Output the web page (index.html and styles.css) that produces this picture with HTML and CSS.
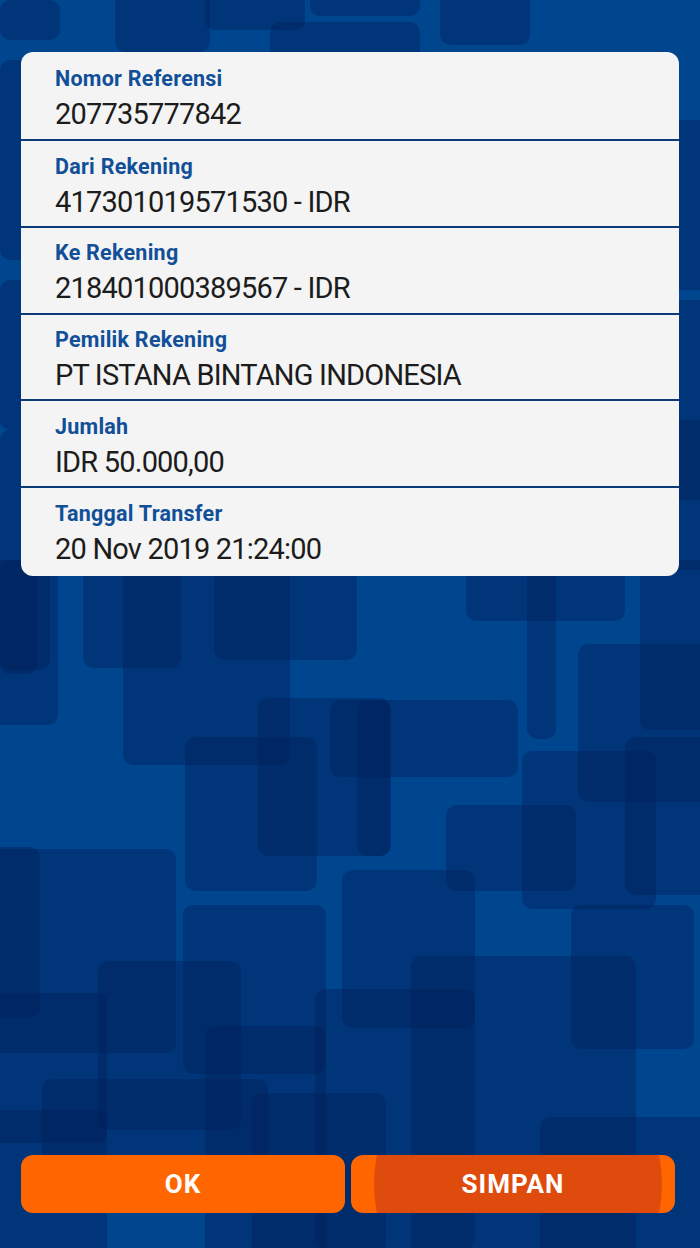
FILE: index.html
```html
<!DOCTYPE html>
<html lang="id">
<head>
<meta charset="utf-8">
<title>Detail Transfer</title>
<link rel="stylesheet" href="styles.css">
</head>
<body>
<div class="screen">
  <svg class="bg" viewBox="0 0 700 1248" preserveAspectRatio="none" aria-hidden="true">
    <g class="tiles">
      <rect x="0" y="0" width="60" height="40" rx="10"/>
      <rect x="115" y="-10" width="95" height="62" rx="10"/>
      <rect x="205" y="-10" width="100" height="40" rx="10"/>
      <rect x="270" y="22" width="150" height="40" rx="10"/>
      <rect x="310" y="-10" width="110" height="26" rx="10"/>
      <rect x="440" y="-10" width="90" height="55" rx="10"/>
      <rect x="0" y="60" width="40" height="200" rx="10"/>
      <rect x="0" y="280" width="30" height="150" rx="10"/>
      <rect x="0" y="430" width="50" height="240" rx="10"/>
      <rect x="650" y="120" width="60" height="170" rx="10"/>
      <rect x="660" y="300" width="50" height="200" rx="10"/>
      <rect x="640" y="420" width="70" height="150" rx="10"/>
      <rect x="0" y="560" width="37" height="114" rx="10"/>
      <rect x="-10" y="560" width="68" height="165" rx="10"/>
      <rect x="83" y="570" width="98" height="98" rx="10"/>
      <rect x="123" y="560" width="167" height="205" rx="10"/>
      <rect x="214" y="570" width="143" height="90" rx="10"/>
      <rect x="466" y="560" width="159" height="61" rx="10"/>
      <rect x="527" y="570" width="29" height="169" rx="10"/>
      <rect x="640" y="560" width="70" height="170" rx="10"/>
      <rect x="578" y="644" width="132" height="158" rx="10"/>
      <rect x="258" y="698" width="132" height="158" rx="10"/>
      <rect x="330" y="700" width="188" height="77" rx="10"/>
      <rect x="357" y="700" width="34" height="156" rx="10"/>
      <rect x="185" y="737" width="132" height="154" rx="10"/>
      <rect x="522" y="751" width="134" height="158" rx="10"/>
      <rect x="625" y="737" width="85" height="158" rx="10"/>
      <rect x="446" y="805" width="130" height="86" rx="10"/>
      <rect x="-10" y="849" width="186" height="204" rx="10"/>
      <rect x="-10" y="847" width="50" height="170" rx="10"/>
      <rect x="183" y="905" width="143" height="169" rx="10"/>
      <rect x="342" y="870" width="133" height="158" rx="10"/>
      <rect x="571" y="905" width="123" height="144" rx="10"/>
      <rect x="411" y="956" width="225" height="300" rx="10"/>
      <rect x="98" y="961" width="143" height="169" rx="10"/>
      <rect x="-10" y="993" width="117" height="150" rx="10"/>
      <rect x="205" y="1026" width="121" height="230" rx="10"/>
      <rect x="315" y="989" width="160" height="260" rx="10"/>
      <rect x="42" y="1079" width="226" height="120" rx="10"/>
      <rect x="252" y="1093" width="134" height="160" rx="10"/>
      <rect x="540" y="1117" width="170" height="140" rx="10"/>
      <rect x="-10" y="1110" width="117" height="150" rx="10"/>
    </g>
  </svg>

  <section class="card">
    <div class="row">
      <div class="label">Nomor Referensi</div>
      <div class="value">207735777842</div>
    </div>
    <div class="row">
      <div class="label">Dari Rekening</div>
      <div class="value">417301019571530 - IDR</div>
    </div>
    <div class="row">
      <div class="label">Ke Rekening</div>
      <div class="value">218401000389567 - IDR</div>
    </div>
    <div class="row">
      <div class="label">Pemilik Rekening</div>
      <div class="value">PT ISTANA BINTANG INDONESIA</div>
    </div>
    <div class="row">
      <div class="label">Jumlah</div>
      <div class="value">IDR 50.000,00</div>
    </div>
    <div class="row">
      <div class="label">Tanggal Transfer</div>
      <div class="value">20 Nov 2019 21:24:00</div>
    </div>
  </section>

  <div class="actions">
    <button class="btn" type="button">OK</button>
    <button class="btn btn-pressed" type="button"><span class="btn-text">SIMPAN</span></button>
  </div>
</div>
</body>
</html>
```

FILE: styles.css
```css
* { box-sizing: border-box; }

html, body {
  margin: 0;
  padding: 0;
}

body {
  font-family: Roboto, "Noto Sans", "Liberation Sans", sans-serif;
  background: #00468f;
}

.screen {
  position: relative;
  width: 700px;
  height: 1248px;
  overflow: hidden;
  display: flex;
  flex-direction: column;
  background: #00468f;
}

.bg {
  position: absolute;
  left: 0;
  top: 0;
  width: 700px;
  height: 1248px;
}

.tiles rect {
  fill: #001f58;
  fill-opacity: 0.4;
}

.card {
  position: relative;
  margin: 52px 21px 0 21px;
  background: #f4f4f4;
  border-radius: 12px;
  padding: 1px 0 3px 0;
}

.row {
  height: 86.7px;
  padding: 13.5px 0 0 34px;
  border-bottom: 2px solid #0b3b78;
}

.row:first-child {
  height: 88.3px;
}

.row:last-child {
  border-bottom: none;
  height: 84.7px;
}

.label {
  font-size: 21.5px;
  line-height: 24px;
  letter-spacing: 0.25px;
  font-weight: 700;
  color: #114f98;
}

.value {
  margin-top: 6px;
  font-size: 29px;
  line-height: 34px;
  letter-spacing: -0.8px;
  color: #1c1c1c;
  white-space: nowrap;
}

.actions {
  position: relative;
  margin-top: auto;
  display: flex;
  gap: 6px;
  padding: 0 25px 35px 21px;
}

.btn {
  flex: 1;
  position: relative;
  overflow: hidden;
  height: 58px;
  border: none;
  border-radius: 12px;
  background: #ff6600;
  color: #ffffff;
  font-family: Roboto, "Noto Sans", "Liberation Sans", sans-serif;
  font-size: 26px;
  font-weight: 700;
  letter-spacing: 1px;
  padding: 0;
}

.btn-pressed::before {
  content: "";
  position: absolute;
  left: 23px;
  top: 50%;
  width: 288px;
  height: 288px;
  margin-top: -144px;
  border-radius: 50%;
  background: #df4a0d;
}

.btn-text {
  position: relative;
}
```
